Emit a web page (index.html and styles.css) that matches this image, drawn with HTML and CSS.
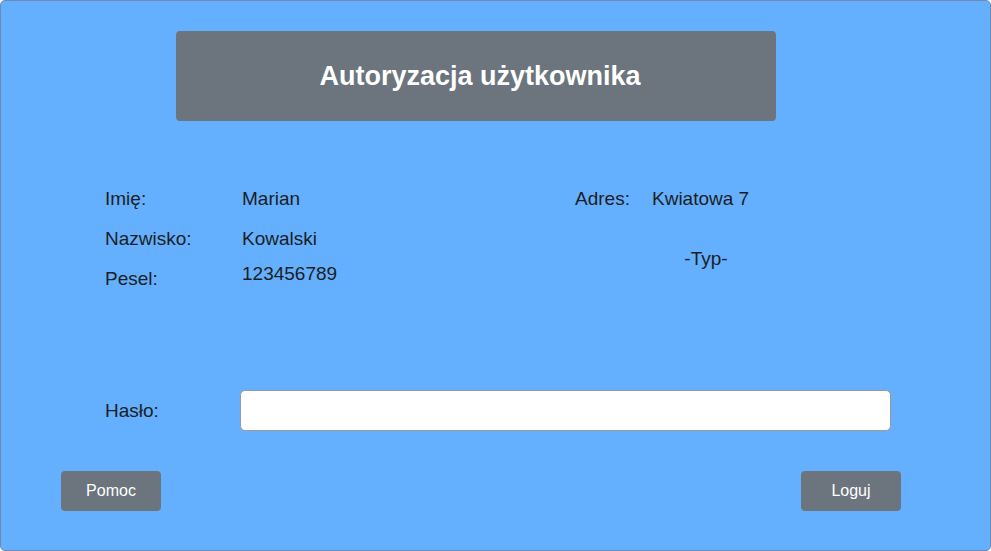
FILE: index.html
```html
<!DOCTYPE html>
<html lang="pl">
<head>
<meta charset="utf-8">
<title>Autoryzacja użytkownika</title>
<link rel="stylesheet" href="styles.css">
</head>
<body>
<div class="frame">
  <header class="title-bar">
    <h1 class="title">Autoryzacja użytkownika</h1>
  </header>

  <section class="details">
    <div class="person">
      <div class="col labels">
        <div class="cell">Imię:</div>
        <div class="cell">Nazwisko:</div>
        <div class="cell">Pesel:</div>
      </div>
      <div class="col values">
        <div class="cell">Marian</div>
        <div class="cell">Kowalski</div>
        <div class="cell cell-up">123456789</div>
      </div>
    </div>
    <div class="address">
      <div class="addr-row">
        <div class="cell addr-label">Adres:</div>
        <div class="cell">Kwiatowa 7</div>
      </div>
      <div class="cell type">-Typ-</div>
    </div>
  </section>

  <div class="password-row">
    <label class="pw-label" for="pw">Hasło:</label>
    <input class="pw-input" id="pw" type="password">
  </div>

  <div class="actions">
    <button class="btn" type="button">Pomoc</button>
    <button class="btn" type="button">Loguj</button>
  </div>
</div>
</body>
</html>
```

FILE: styles.css
```css
* { box-sizing: border-box; }

html, body {
  margin: 0;
  padding: 0;
  background: #ffffff;
}

body {
  font-family: "Liberation Sans", Arial, sans-serif;
  color: #1b1e24;
}

.frame {
  width: 991px;
  height: 551px;
  border: 1px solid #7189b3;
  border-radius: 5px;
  background: #64b0ff;
  display: flex;
  flex-direction: column;
}

.title-bar {
  margin: 30px 0 0 175px;
  width: 600px;
  height: 90px;
  background: #6c757d;
  border-radius: 4px;
  display: flex;
  align-items: center;
  justify-content: center;
}

.title {
  margin: 0 0 0 8px;
  font-size: 27px;
  font-weight: bold;
  color: #ffffff;
}

.details {
  margin-top: 58px;
  padding-left: 104px;
  display: flex;
}

.person {
  width: 470px;
  display: flex;
}

.col {
  display: flex;
  flex-direction: column;
}

.labels { width: 137px; }

.cell {
  font-size: 19px;
  line-height: 40px;
  height: 40px;
  white-space: nowrap;
}

.cell-up { margin-top: -5px; }

.address {
  width: 262px;
  display: flex;
  flex-direction: column;
}

.addr-row { display: flex; }

.addr-label { width: 77px; }

.type {
  margin-top: 20px;
  text-align: center;
}

.password-row {
  margin-top: 91px;
  padding-left: 104px;
  display: flex;
  align-items: center;
}

.pw-label {
  width: 135px;
  font-size: 19px;
}

.pw-input {
  width: 651px;
  height: 41px;
  border: 1px solid #9a9a9a;
  border-radius: 5px;
  background: #ffffff;
  padding: 0 10px;
  font-size: 16px;
  outline: none;
}

.actions {
  margin-top: 40px;
  padding-left: 60px;
  display: flex;
  gap: 640px;
}

.btn {
  width: 100px;
  height: 40px;
  border: none;
  border-radius: 4px;
  background: #6c757d;
  color: #ffffff;
  font-family: "Liberation Sans", Arial, sans-serif;
  font-size: 16px;
  padding: 0;
}
```
